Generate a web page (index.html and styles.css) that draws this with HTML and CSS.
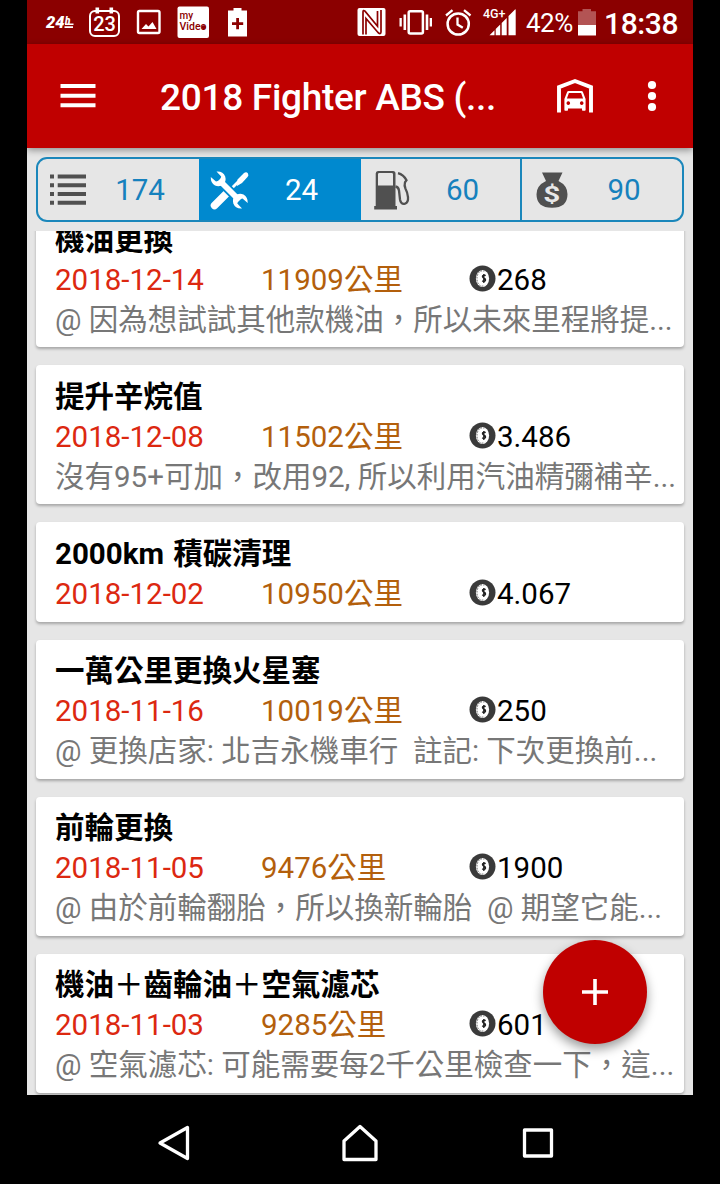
FILE: index.html
```html
<!DOCTYPE html>
<html lang="zh-Hant">
<head>
<meta charset="utf-8">
<title>2018 Fighter ABS</title>
<link rel="stylesheet" href="styles.css">
</head>
<body>
<svg class="defs" width="0" height="0" aria-hidden="true">
  <symbol id="coin" viewBox="0 0 27 27">
    <circle cx="13.5" cy="13.5" r="13" fill="#3a3a3a"/>
    <ellipse cx="13.5" cy="13.5" rx="6.600" ry="8.600" fill="#fff"/>
    <ellipse cx="12.900" cy="13.500" rx="4.900" ry="7.600" fill="none" stroke="#555" stroke-width=".9" stroke-dasharray="1.600 1.200"/>
    <ellipse cx="14.800" cy="13.500" rx="4.300" ry="7" fill="#fff"/>
    <path d="M16.600 10.800q-1.400-1.300-2.700-.3-1 1.400.6 2.500 2.300.8 1.900 2.600-1.200 1.700-3.200.2M14.800 9v9" fill="none" stroke="#222" stroke-width="1.400"/>
  </symbol>
</svg>
<div class="phone">
  <header class="status">
    <svg class="status-left" width="230" height="44" viewBox="27 0 230 44" fill="#fff">
      <g font-family="Roboto, sans-serif" font-weight="900" font-style="italic">
        <text x="46" y="28" font-size="16" textLength="18.500" lengthAdjust="spacingAndGlyphs">24</text>
        <text x="65" y="23.500" font-size="10">h</text>
      </g>
      <path d="M65 23.500h8.500v1.500h-8.500zM64.500 26.300h8.500v1.700h-8.500z"/>
      <rect x="90" y="11" width="29" height="25" rx="5" fill="none" stroke="#fff" stroke-width="2"/>
      <path d="M95.500 7.500h3.600v6h-3.600zM109.500 7.500h3.600v6h-3.600z"/>
      <text x="104.500" y="30.500" font-family="Roboto, sans-serif" font-size="20" font-weight="500" text-anchor="middle">23</text>
      <rect x="138" y="11" width="21.500" height="22" rx="1.500" fill="none" stroke="#fff" stroke-width="2.400"/>
      <path d="M141.500 29l4.500-5 2.500 2.500 4-4.500 4 7z"/>
      <rect x="177.500" y="6.500" width="31.500" height="31.500" rx="2"/>
      <g font-family="Roboto, sans-serif" font-weight="500" fill="#8b0000">
        <text x="179.500" y="19" font-size="10">my</text>
        <text x="179.500" y="30" font-size="10.500" textLength="27" lengthAdjust="spacingAndGlyphs">Video</text>
      </g>
      <circle cx="203.700" cy="27.300" r="2" fill="#8b0000"/>
      <path fill-rule="evenodd" d="M233.500 8h8v2.500h5.500v26h-19v-26h5.500zM236.200 18v4.200H232v2.800h4.200v4.200h2.800V25h4.200v-2.800H239V18z"/>
    </svg>
    <svg class="status-right" width="170" height="44" viewBox="352 0 170 44" fill="#fff">
      <rect x="357.500" y="8" width="28" height="28" rx="2"/>
      <path d="M363 34.500V12q0-2.500 2-.8l12.500 15V11M366 34.500V18.500L378 32.500q3 2.400 3-.8V10" fill="none" stroke="#8b0000" stroke-width="1.700"/>
      <rect x="408.700" y="11.200" width="14.200" height="22.400" rx="1.500" fill="none" stroke="#fff" stroke-width="2.500"/>
      <path d="M403.500 14.500h2.600v15.500h-2.600zM399.500 18h2.300v8.500h-2.300zM425.700 14.500h2.600v15.500h-2.600zM429.700 18h2.300v8.500h-2.300z"/>
      <circle cx="458.200" cy="24" r="10.600" fill="none" stroke="#fff" stroke-width="2.500"/>
      <path d="M446 15.500l6.500-5.300M470.500 15.500l-6.500-5.300M457.500 17.500v7l5.300 3.300" fill="none" stroke="#fff" stroke-width="2.300"/>
      <text x="483" y="17.500" font-family="Roboto, sans-serif" font-size="12.500" font-weight="500">4G+</text>
      <path d="M489.500 35.200l5-5v5zM495.700 28.900l4.500-4.500v10.800h-4.500zM501.700 22.900l5-5v17.300h-5zM508.500 16.100l6-6q1.200-1.500 1.200 0v25.100h-7.200z"/>
    </svg>
    <span class="percent">42%</span>
    <svg class="battery" width="18" height="27" viewBox="0 0 18 27">
      <path d="M4.500 0h8.500v2.200h5V16H0V2.200h4.500z" fill="#b35454"/>
      <path d="M0 16h18v10.500H0z" fill="#fff"/>
    </svg>
    <span class="clock">18:38</span>
  </header>

  <div class="appbar">
    <svg class="menu" width="36" height="26" viewBox="0 0 36 26"><path d="M.5 1h35v4H.5zM.5 10.700h35v4H.5zM.5 20.300h35v4H.5z" fill="#fff"/></svg>
    <h1 class="title">2018 Fighter ABS (...</h1>
    <svg class="garage" width="38" height="36" viewBox="0 0 38 36" fill="#fff">
      <path d="M3 34.500V9.200L19 3l16 6.200v25.300" fill="none" stroke="#fff" stroke-width="3.900"/>
      <path fill-rule="evenodd" d="M12.500 13h13q1 0 1.400 1l2.700 7v11q0 .8-.8.8h-2q-.8 0-.8-.8v-1.500H12V32q0 .8-.8.800h-2q-.8 0-.8-.8V21l2.700-7q.4-1 1.400-1zM12.900 15l-2 5.500h16.200l-2-5.500zM12.300 23.300a1.800 1.800 0 1 0 .01 0zM25.700 23.300a1.800 1.800 0 1 0 .01 0z"/>
    </svg>
    <svg class="more" width="10" height="32" viewBox="0 0 10 32" fill="#fff"><circle cx="5" cy="5" r="4.100"/><circle cx="5" cy="16" r="4.100"/><circle cx="5" cy="27" r="4.100"/></svg>
  </div>

  <main class="body">
    <nav class="tabs">
      <div class="tab">
        <svg width="40" height="40" viewBox="0 0 40 40" fill="#505050"><path d="M2 4.500h4v4H2zM2 13.300h4v4H2zM2 22h4v4H2zM2 30.800h4v4H2zM9.700 4.500H38v4H9.700zM9.700 13.300H38v4H9.700zM9.700 22H38v4H9.700zM9.700 30.800H38v4H9.700z"/></svg>
        <span>174</span>
      </div>
      <div class="tab active">
        <svg width="40" height="40" viewBox="0 0 40 40">
          <path d="M5.500 35.500L18 23" stroke="#fff" stroke-width="7.500" stroke-linecap="round"/>
          <path d="M22 19l9-9" stroke="#fff" stroke-width="2.800"/>
          <path d="M28.500 9.500l6.500-6.500q2.500-1.500 4 .5 1 2-.5 3.500L33 13l-5 3z" fill="#fff"/>
          <path d="M12 12l17 17" stroke="#0089cf" stroke-width="9.500"/>
          <path d="M10 10l20.500 20.500" stroke="#fff" stroke-width="5.800"/>
          <path d="M7.500 1.500Q14 1 16.200 6.500 17.500 11 14.500 14.300 10.500 17.500 6 15.500 1.500 13 1.800 7L7 11.500l4-1 1.200-4zM33 38.500q-6.500.5-8.700-5-1.300-4.500 1.700-7.800 4-3.200 8.500-1.200 4.500 2.500 4.200 8.500l-5.200-4.500-4 1-1.200 4z" fill="#fff"/>
        </svg>
        <span>24</span>
      </div>
      <div class="tab tab-fuel">
        <svg width="40" height="40" viewBox="0 0 40 40">
          <path fill="#505050" fill-rule="evenodd" d="M6 1h15q2.500 0 2.500 2.500V36H25v3.500H2.200V36h1.500V3.500Q3.700 1 6 1zm1.300 2q-1.300 0-1.300 1.300V15.500h15V4.300Q21 3 19.700 3z"/>
          <path d="M23.500 16.500q3 .5 3.500 4l1 9q.8 5.200 5 4.200 3.500-1.200 3-6.500-.5-5-2.500-8.500-1.500-3-.5-6.500l1.500-2q-3-5.500-8.500-7" fill="none" stroke="#505050" stroke-width="2.300"/>
        </svg>
        <span>60</span>
      </div>
      <div class="tab tab-cost">
        <svg width="40" height="40" viewBox="0 0 40 40">
          <path d="M10 2.500h20.500L26.500 11q9 4.500 9 13.300 0 13.500-15.500 13.500T4.500 24.300q0-8.800 9.500-13.300z" fill="#505050"/>
          <text x="19.700" y="31.500" font-family="Roboto, sans-serif" font-size="22" font-weight="700" text-anchor="middle" textLength="17" lengthAdjust="spacingAndGlyphs" fill="#e7e7e7">$</text>
        </svg>
        <span>90</span>
      </div>
    </nav>

    <section class="records">
      <article class="card">
        <h2>機油更換</h2>
        <div class="facts"><span class="date">2018-12-14</span><span class="km">11909公里</span><span class="cost"><svg><use href="#coin"/></svg>268</span></div>
        <p>@ 因為想試試其他款機油，所以未來里程將提...</p>
      </article>
      <article class="card">
        <h2>提升辛烷值</h2>
        <div class="facts"><span class="date">2018-12-08</span><span class="km">11502公里</span><span class="cost"><svg><use href="#coin"/></svg>3.486</span></div>
        <p>沒有95+可加，改用92, 所以利用汽油精彌補辛...</p>
      </article>
      <article class="card">
        <h2 class="mixed">2000km 積碳清理</h2>
        <div class="facts"><span class="date">2018-12-02</span><span class="km">10950公里</span><span class="cost"><svg><use href="#coin"/></svg>4.067</span></div>
      </article>
      <article class="card">
        <h2>一萬公里更換火星塞</h2>
        <div class="facts"><span class="date">2018-11-16</span><span class="km">10019公里</span><span class="cost"><svg><use href="#coin"/></svg>250</span></div>
        <p>@ 更換店家: 北吉永機車行&nbsp; 註記: 下次更換前...</p>
      </article>
      <article class="card">
        <h2>前輪更換</h2>
        <div class="facts"><span class="date">2018-11-05</span><span class="km">9476公里</span><span class="cost"><svg><use href="#coin"/></svg>1900</span></div>
        <p>@ 由於前輪翻胎，所以換新輪胎&nbsp; @ 期望它能...</p>
      </article>
      <article class="card">
        <h2>機油<i>＋</i>齒輪油<i>＋</i>空氣濾芯</h2>
        <div class="facts"><span class="date">2018-11-03</span><span class="km">9285公里</span><span class="cost"><svg><use href="#coin"/></svg>601</span></div>
        <p>@ 空氣濾芯: 可能需要每2千公里檢查一下，這...</p>
      </article>
    </section>
    <button class="fab" aria-label="新增"><svg width="28" height="28" viewBox="0 0 28 28"><path d="M14 1v26M1 14h26" stroke="#fff" stroke-width="3.600"/></svg></button>
  </main>
</div>

<footer class="navbar">
  <svg width="34" height="38" viewBox="0 0 34 38"><path d="M30.500 3.500v31L3 19z"/></svg>
  <svg width="38" height="38" viewBox="0 0 38 38"><path d="M19 2.500L35 17v18.500H3V17z"/></svg>
  <svg width="32" height="32" viewBox="0 0 32 32"><path d="M2.500 3h27v26h-27z"/></svg>
</footer>
</body>
</html>
```
FILE: styles.css
```css
* { box-sizing: border-box; }

body {
  margin: 0;
  width: 720px;
  height: 1184px;
  overflow: hidden;
  background: #000;
  font-family: Roboto, "Noto Sans CJK TC", sans-serif;
}

.defs { position: absolute; }
svg { display: block; flex: none; }

.phone {
  width: 666px;
  height: 1095px;
  margin-left: 27px;
  display: flex;
  flex-direction: column;
  background: #e6e6e6;
}

.status {
  height: 44px;
  flex: none;
  display: flex;
  align-items: center;
  background: #8b0000;
  color: #fff;
}
.status-right { margin-left: 95px; }
.percent { margin-left: 4px; width: 47px; font-size: 26px; white-space: nowrap; padding-top: 2px; letter-spacing: -0.5px; }
.battery { margin: 1px 8px 0 5px; }
.clock { font-size: 30px; font-weight: 500; padding-top: 2px; letter-spacing: -0.4px; }

.appbar {
  height: 104px;
  flex: none;
  display: flex;
  align-items: center;
  padding-left: 33px;
  background: #c00000;
  box-shadow: 0 2px 7px rgba(0, 0, 0, .4);
  z-index: 1;
}
.title {
  margin: 4px 0 0 64px;
  width: 396px;
  color: #fff;
  font-size: 37px;
  line-height: 44px;
  font-weight: 500;
  letter-spacing: -0.3px;
  white-space: nowrap;
}
.garage { margin-bottom: 1px; }
.more { margin-left: 53px; }

.body {
  flex: 1;
  min-height: 0;
  padding: 9px 9px 0;
  position: relative;
  display: flex;
  flex-direction: column;
}

.tabs {
  display: grid;
  grid-template-columns: 161px 162px 161px 1fr;
  flex: none;
  height: 65px;
  border: 2px solid #1b87bb;
  border-radius: 11px;
  overflow: hidden;
  background: #e6e6e6;
}
.tab {
  display: flex;
  align-items: center;
  padding-left: 10px;
  color: #1681bd;
  font-size: 29.5px;
}
.tab span { flex: 1; text-align: center; padding: 1px 7px 0 0; }
.tab.active { background: #0089cf; color: #fff; }
.tab-fuel { border-right: 2px solid #1b87bb; }
.tab-fuel svg { margin-left: 1px; }
.tab.tab-cost span { padding-right: 6px; }

.records {
  flex: 1;
  min-height: 0;
  margin: 9px -9px 0;
  padding: 0 9px;
  overflow: hidden;
}
.card {
  padding: 11.500px 19px 7.700px;
  margin-bottom: 18px;
  background: #fff;
  border-radius: 4px;
  box-shadow: 0 2px 3px rgba(0, 0, 0, .28);
  font-size: 29.500px;
  line-height: 40px;
}
.card:first-child { margin-top: -23px; }
.card h2 {
  margin: 0;
  font-size: inherit;
  line-height: 40px;
  height: 40px;
  font-weight: 700;
  color: #000;
  white-space: nowrap;
}
.card h2.mixed { word-spacing: 2px; }
.card h2 i { font-style: normal; font-weight: 500; }
.facts {
  display: grid;
  grid-template-columns: 206px 208px 1fr;
  height: 40px;
}
.date { color: #dc2810; }
.km { color: #b35f0c; }
.cost { display: flex; align-items: center; color: #000; gap: 1px; }
.cost svg { width: 27px; height: 27px; margin-bottom: 3px; }
.card p {
  margin: 0;
  height: 40px;
  color: #777;
  white-space: nowrap;
}

.fab {
  position: absolute;
  right: 46px;
  bottom: 51px;
  width: 104px;
  height: 104px;
  border: 0;
  border-radius: 50%;
  background: #c00000;
  box-shadow: 0 5px 11px rgba(0, 0, 0, .4);
  display: flex;
  align-items: center;
  justify-content: center;
}

.navbar {
  height: 89px;
  display: flex;
  align-items: center;
  padding: 6px 0 0 157px;
}
.navbar svg { fill: none; stroke: #fff; stroke-width: 3.300px; stroke-linejoin: round; }
.navbar svg + svg { margin-left: 150px; }
.navbar svg + svg + svg { margin-left: 143px; }
```
